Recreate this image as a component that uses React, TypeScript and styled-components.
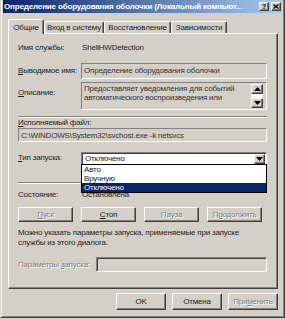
import React from 'react';
import styled, { createGlobalStyle, css } from 'styled-components';

const GlobalStyle = createGlobalStyle`
  html, body { margin: 0; padding: 0; background: #d4d0c8; }
  body { font-family: "Liberation Sans", Arial, sans-serif; font-size: 8px; letter-spacing: -0.2px; color: #111; }
  * { box-sizing: border-box; }
`;

const raised = css`
  background: #d4d0c8;
  border: 1px solid;
  border-color: #fff #404040 #404040 #fff;
  box-shadow: inset -1px -1px #808080;
`;

const sunken = css`
  border: 1px solid;
  border-color: #808080 #fff #fff #808080;
`;

const disabledText = css`
  color: #808080;
  text-shadow: 1px 1px #fff;
`;

const Window = styled.div`
  width: 285px;
  height: 318px;
  background: #d4d0c8;
  border-style: solid;
  border-width: 0 1px 1px 1px;
  border-color: #d4d0c8 #404040 #404040 #d4d0c8;
  box-shadow: inset 1px 0 #fff, inset -1px -1px #808080;
  padding: 0 2px 2px 2px;
  display: flex;
  flex-direction: column;
`;

const TitleBar = styled.div`
  height: 13px;
  background: linear-gradient(to right, #0a246a, #a6caf0);
  display: flex;
  align-items: center;
  padding: 0 1px 0 1px;
  gap: 2px;
`;

const TitleText = styled.div`
  flex: 1;
  color: #fff;
  font-weight: bold;
  font-size: 8px;
  letter-spacing: -0.15px;
  line-height: 13px;
  white-space: nowrap;
  overflow: hidden;
`;

const CaptionButton = styled.div`
  ${raised};
  width: 10px;
  height: 9px;
  display: flex;
  align-items: center;
  justify-content: center;
  font-weight: bold;
  font-size: 7px;
  line-height: 7px;
  color: #000;
`;

const Body = styled.div`
  display: flex;
  flex-direction: column;
  padding: 6px 4px 0 5px;
`;

const TabStrip = styled.div`
  height: 15px;
  display: flex;
  align-items: flex-end;
  position: relative;
  z-index: 2;
`;

const Tab = styled.div<{ $w: number; $active?: boolean }>`
  width: ${(p) => p.$w}px;
  height: ${(p) => (p.$active ? 15 : 12)}px;
  margin-bottom: ${(p) => (p.$active ? 0 : 1)}px;
  background: #d4d0c8;
  border: 1px solid;
  border-bottom: none;
  border-color: #fff #404040 #404040 #fff;
  border-radius: 2px 2px 0 0;
  box-shadow: inset -1px 0 #808080;
  display: flex;
  justify-content: center;
  padding-top: ${(p) => (p.$active ? 3 : 1)}px;
  line-height: 9px;
  white-space: nowrap;
  color: #222;
`;

const Panel = styled.div`
  margin-top: -1px;
  height: 256px;
  ${raised};
  padding: 9px 10px 0 9px;
  display: flex;
  flex-direction: column;
`;

const FieldRow = styled.div<{ $mt: number; $label?: number }>`
  display: grid;
  grid-template-columns: ${(p) => p.$label ?? 63}px 1fr;
  margin-top: ${(p) => p.$mt}px;
  position: relative;
`;

const Label = styled.div<{ $pt?: number; $disabled?: boolean }>`
  line-height: 10px;
  padding-top: ${(p) => p.$pt ?? 0}px;
  white-space: nowrap;
  color: #222;
  ${(p) => p.$disabled && disabledText};
`;

const Value = styled.div`
  line-height: 10px;
  padding-left: 1px;
  white-space: nowrap;
  color: #222;
`;

const U = styled.span`
  text-decoration: underline;
`;

const ReadBox = styled.div<{ $h: number }>`
  ${sunken};
  height: ${(p) => p.$h}px;
  background: #d4d0c8;
  padding: 2px 2px 0 2px;
  line-height: 9px;
  white-space: nowrap;
  overflow: hidden;
  color: #333;
`;

const DescBox = styled.div`
  ${sunken};
  height: 28px;
  background: #d4d0c8;
  display: flex;
`;

const DescText = styled.div`
  flex: 1;
  padding: 1px 2px 0 2px;
  line-height: 9px;
  color: #333;
`;

const ScrollBar = styled.div`
  width: 12px;
  margin: 1px 3px 1px 0;
  display: flex;
  flex-direction: column;
  justify-content: space-between;
  background: #fff;
`;

const ScrollButton = styled.div`
  ${raised};
  height: 10px;
  display: flex;
  align-items: center;
  justify-content: center;
`;

const Separator = styled.div<{ $mt: number }>`
  margin-top: ${(p) => p.$mt}px;
  border-top: 1px solid #808080;
  border-bottom: 1px solid #fff;
`;

const Combo = styled.div`
  position: relative;
  height: 13px;
  background: #fff;
  border: 1px solid;
  border-color: #808080 #fff #fff #808080;
  box-shadow: inset 1px 1px #404040;
  display: flex;
  align-items: center;
  padding: 1px 1px 1px 3px;
`;

const ComboText = styled.div`
  flex: 1;
  line-height: 10px;
  color: #222;
`;

const ComboArrow = styled.div`
  ${raised};
  width: 11px;
  height: 10px;
  display: flex;
  align-items: center;
  justify-content: center;
`;

const DropList = styled.div`
  position: absolute;
  top: 100%;
  left: -1px;
  right: -1px;
  background: #fff;
  border: 1px solid #000;
  z-index: 5;
`;

const DropItem = styled.div<{ $selected?: boolean }>`
  height: 9px;
  line-height: 9px;
  padding-left: 2px;
  color: ${(p) => (p.$selected ? '#fff' : '#222')};
  background: ${(p) => (p.$selected ? '#0a246a' : '#fff')};
`;

const ButtonRow = styled.div<{ $mt: number }>`
  display: flex;
  gap: 8px;
  margin-top: ${(p) => p.$mt}px;
`;

const PushButton = styled.div<{ $w: number; $h: number; $disabled?: boolean }>`
  ${raised};
  width: ${(p) => p.$w}px;
  height: ${(p) => p.$h}px;
  display: flex;
  align-items: center;
  justify-content: center;
  line-height: 10px;
  color: #222;
  ${(p) => p.$disabled && disabledText};
`;

const Paragraph = styled.div<{ $mt: number }>`
  margin-top: ${(p) => p.$mt}px;
  line-height: 10px;
  color: #222;
`;

const InputBox = styled.div`
  ${sunken};
  box-shadow: inset 1px 1px #404040;
  height: 15px;
  background: #d4d0c8;
`;

const DialogButtons = styled.div`
  display: flex;
  justify-content: flex-end;
  gap: 6px;
  margin-top: 4px;
`;

const Arrow = ({ up }: { up?: boolean }) => (
  <svg width="7" height="4" viewBox="0 0 7 4">
    <polygon points={up ? '3.5,0 7,4 0,4' : '0,0 7,0 3.5,4'} fill="#000" />
  </svg>
);

const CloseGlyph = () => (
  <svg width="6" height="5" viewBox="0 0 6 5">
    <path d="M0.5 0.5 L5.5 4.5 M5.5 0.5 L0.5 4.5" stroke="#000" strokeWidth="1.3" />
  </svg>
);

export default function App() {
  return (
    <>
      <GlobalStyle />
      <Window>
        <TitleBar>
          <TitleText>Определение оборудования оболочки (Локальный компьют...</TitleText>
          <CaptionButton>?</CaptionButton>
          <CaptionButton>
            <CloseGlyph />
          </CaptionButton>
        </TitleBar>
        <Body>
          <TabStrip>
            <Tab $w={36} $active>Общие</Tab>
            <Tab $w={60}>Вход в систему</Tab>
            <Tab $w={67}>Восстановление</Tab>
            <Tab $w={56}>Зависимости</Tab>
          </TabStrip>
          <Panel>
            <FieldRow $mt={0}>
              <Label>Имя службы:</Label>
              <Value>ShellHWDetection</Value>
            </FieldRow>
            <FieldRow $mt={10}>
              <Label $pt={3}>
                <U>В</U>ыводимое имя:
              </Label>
              <ReadBox $h={16}>Определение оборудования оболочки</ReadBox>
            </FieldRow>
            <FieldRow $mt={3}>
              <Label $pt={6}>
                <U>О</U>писание:
              </Label>
              <DescBox>
                <DescText>
                  Предоставляет уведомления для событий
                  <br />
                  автоматического воспроизведения или
                </DescText>
                <ScrollBar>
                  <ScrollButton>
                    <Arrow up />
                  </ScrollButton>
                  <ScrollButton>
                    <Arrow />
                  </ScrollButton>
                </ScrollBar>
              </DescBox>
            </FieldRow>
            <Separator $mt={6} />
            <Label $pt={0}>
              <U>И</U>сполняемый файл:
            </Label>
            <ReadBox $h={14}>C:\WINDOWS\System32\svchost.exe -k netsvcs</ReadBox>
            <FieldRow $mt={10}>
              <Label $pt={1}>
                <U>Т</U>ип запуска:
              </Label>
              <Combo>
                <ComboText>Отключено</ComboText>
                <ComboArrow>
                  <Arrow />
                </ComboArrow>
                <DropList>
                  <DropItem>Авто</DropItem>
                  <DropItem>Вручную</DropItem>
                  <DropItem $selected>Отключено</DropItem>
                </DropList>
              </Combo>
            </FieldRow>
            <Separator $mt={17} />
            <FieldRow $mt={6}>
              <Label>Состояние:</Label>
              <Value>Остановлена</Value>
            </FieldRow>
            <ButtonRow $mt={7}>
              <PushButton $w={55} $h={15} $disabled>
                <U>П</U>уск
              </PushButton>
              <PushButton $w={55} $h={15}>
                <U>С</U>топ
              </PushButton>
              <PushButton $w={55} $h={15} $disabled>
                Па<U>у</U>за
              </PushButton>
              <PushButton $w={55} $h={15} $disabled>
                П<U>р</U>одолжить
              </PushButton>
            </ButtonRow>
            <Paragraph $mt={6}>
              Можно указать параметры запуска, применяемые при запуске
              <br />
              службы из этого диалога.
            </Paragraph>
            <FieldRow $mt={9} $label={78}>
              <Label $pt={3} $disabled>
                Параметры <U>з</U>апуска:
              </Label>
              <InputBox />
            </FieldRow>
          </Panel>
          <DialogButtons>
            <PushButton $w={50} $h={17}>OK</PushButton>
            <PushButton $w={50} $h={17}>Отмена</PushButton>
            <PushButton $w={50} $h={17} $disabled>
              При<U>м</U>енить
            </PushButton>
          </DialogButtons>
        </Body>
      </Window>
    </>
  );
}
